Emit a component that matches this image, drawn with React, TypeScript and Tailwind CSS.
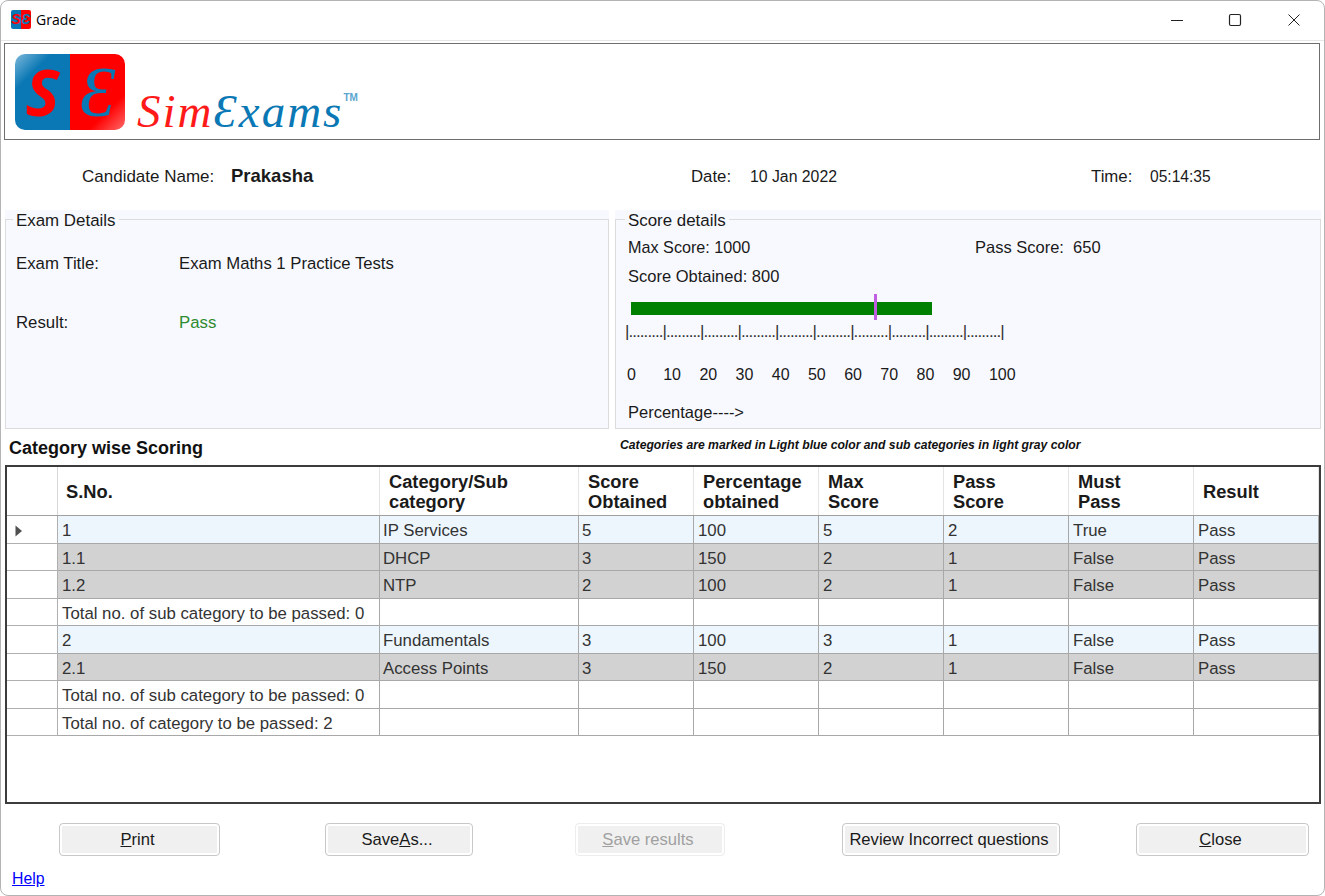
import React from "react";

const colW = ["w-[51px]", "w-[322px]", "w-[199px]", "w-[115px]", "w-[125px]", "w-[125px]", "w-[125px]", "w-[125px]", "w-[125px]"];

const headers = [
  ["S.No."],
  ["Category/Sub", "category"],
  ["Score", "Obtained"],
  ["Percentage", "obtained"],
  ["Max", "Score"],
  ["Pass", "Score"],
  ["Must", "Pass"],
  ["Result"],
];

type Row = { bg: string; cells: string[]; mark?: boolean };
const rows: Row[] = [
  { bg: "bg-[#edf6fd]", mark: true, cells: ["1", "IP Services", "5", "100", "5", "2", "True", "Pass"] },
  { bg: "bg-[#d2d2d2]", cells: ["1.1", "DHCP", "3", "150", "2", "1", "False", "Pass"] },
  { bg: "bg-[#d2d2d2]", cells: ["1.2", "NTP", "2", "100", "2", "1", "False", "Pass"] },
  { bg: "bg-white", cells: ["Total no. of sub category to be passed: 0", "", "", "", "", "", "", ""] },
  { bg: "bg-[#edf6fd]", cells: ["2", "Fundamentals", "3", "100", "3", "1", "False", "Pass"] },
  { bg: "bg-[#d2d2d2]", cells: ["2.1", "Access Points", "3", "150", "2", "1", "False", "Pass"] },
  { bg: "bg-white", cells: ["Total no. of sub category to be passed: 0", "", "", "", "", "", "", ""] },
  { bg: "bg-white", cells: ["Total no. of category to be passed: 2", "", "", "", "", "", "", ""] },
];

const ticks = [0, 10, 20, 30, 40, 50, 60, 70, 80, 90, 100];

function Btn({ w, ml, disabled, children }: { w: string; ml: string; disabled?: boolean; children: React.ReactNode }) {
  return (
    <button
      className={`${w} ${ml} h-[33px] rounded-[4px] border text-[16.6px] pt-[2px] pr-[4px] flex items-center justify-center shadow-[inset_0_0_0_2px_#fff] bg-[#f0f0f0] ${
        disabled ? "border-[#ededed] text-[#a0a0a0]" : "border-[#c8c8c8] text-[#1a1a1a]"
      }`}
    >
      {children}
    </button>
  );
}

function Fieldset({ title, w, ml, pl, legend, children }: { title: string; w: string; ml: string; pl: string; legend: string; children: React.ReactNode }) {
  return (
    <div className={`${w} ${ml} h-[219px] relative bg-[#f8f9ff]`}>
      <div className={`mt-[9px] h-[210px] border border-[#dcdcdc] ${pl} relative`}>
        <div className={`absolute ${legend} top-[-9px] bg-[#f8f9ff] px-[3px] text-[16.9px] leading-[20px]`}>{title}</div>
        {children}
      </div>
    </div>
  );
}

export default function App() {
  return (
    <div className="w-[1325px] h-[896px] bg-white overflow-hidden rounded-t-[8px] rounded-b-[8px] border border-[#b4b4b4] font-['Liberation_Sans',Arial,sans-serif] text-[16.8px] text-[#1a1a1a] flex flex-col">
      {/* title bar */}
      <div className="h-[39px] flex items-center shrink-0">
        <div className="ml-[10px] mb-[2px] w-[20px] h-[19px] flex text-[14px] font-bold leading-[19px] italic">
          <span className="w-[10px] rounded-l-[2px] bg-[#0a78b4] text-[#ff0000] text-center">S</span>
          <span className="w-[10px] rounded-r-[2px] bg-[#ff0000] text-[#0a78b4] text-center">Ɛ</span>
        </div>
        <span className="ml-[5px] mb-[2px] text-[14px] font-['Open_Sans'] text-black">Grade</span>
        <div className="ml-auto flex items-center mr-[23px] mb-[2px]">
          <svg width="14" height="14" viewBox="0 0 14 14" className="mr-[44px]"><path d="M1 7.5H13" stroke="#222" strokeWidth="1" /></svg>
          <svg width="14" height="14" viewBox="0 0 14 14" className="mr-[45px]"><rect x="1.5" y="1.5" width="11" height="11" rx="1.5" fill="none" stroke="#222" strokeWidth="1.2" /></svg>
          <svg width="14" height="14" viewBox="0 0 14 14"><path d="M1.5 1.5L12.5 12.5M12.5 1.5L1.5 12.5" stroke="#222" strokeWidth="1" /></svg>
        </div>
      </div>
      <div className="h-[1px] bg-[#e6e6e6] shrink-0" />

      {/* logo */}
      <div className="ml-[3px] mt-[2px] w-[1316px] h-[97px] border border-[#6e6e6e] flex shrink-0">
        <div className="ml-[10px] mt-[10px] w-[110px] h-[76px] flex text-[64px] leading-[76px] italic">
          <span className="w-[55px] h-[76px] rounded-l-[10px] bg-[linear-gradient(135deg,#7db8dc_0%,#0a78b4_28%)] text-[#ff0000] text-center font-bold font-['Open_Sans']">S</span>
          <span className="w-[55px] h-[76px] rounded-r-[10px] bg-[linear-gradient(135deg,#ff0000_72%,#ff6a6a_100%)] text-[#0a78b4] text-center font-['Liberation_Serif'] text-[72px]">Ɛ</span>
        </div>
        <div className="ml-[12px] mt-[42px] h-[50px] flex items-start font-['Liberation_Serif'] italic text-[47px] leading-[50px] tracking-[2px]">
          <span className="text-[#ff1a1a]">Sim</span>
          <span className="text-[#0a78b4]">Ɛxams</span>
          <span className="text-[10px] leading-[14px] mt-[5px] not-italic tracking-normal font-bold font-['Liberation_Sans'] text-[#5aa6d0]">TM</span>
        </div>
      </div>

      {/* candidate row */}
      <div className="h-[70px] flex items-center shrink-0 pt-[3px]">
        <span className="ml-[81px] w-[149px] text-[17px]">Candidate Name:</span>
        <span className="w-[460px] font-bold text-[18.5px] mb-[2px]">Prakasha</span>
        <span className="w-[59px]">Date:</span>
        <span className="w-[341px] text-[15.8px]">10 Jan 2022</span>
        <span className="w-[59px]">Time:</span>
        <span className="text-[15.6px]">05:14:35</span>
      </div>

      {/* panels */}
      <div className="flex shrink-0">
        <Fieldset title="Exam Details" w="w-[604px]" ml="ml-[4px]" pl="pl-[10px]" legend="left-[7px]">
          <div className="flex mt-[34px] leading-[20px]">
            <span className="w-[163px]">Exam Title:</span>
            <span className="text-[16.7px]">Exam Maths 1 Practice Tests</span>
          </div>
          <div className="flex mt-[39px] leading-[20px]">
            <span className="w-[163px]">Result:</span>
            <span className="text-[#2e8b2e]">Pass</span>
          </div>
        </Fieldset>
        <Fieldset title="Score details" w="w-[706px]" ml="ml-[6px]" pl="pl-[12px]" legend="left-[9px]">
          <div className="flex mt-[17px] leading-[20px] text-[16.2px]">
            <span className="w-[347px]">Max Score: 1000</span>
            <span className="text-[16.5px]">Pass Score:&nbsp; 650</span>
          </div>
          <div className="mt-[9px] leading-[20px] text-[16.5px]">Score Obtained: 800</div>
          <div className="relative ml-[3px] mt-[16px] w-[301px] h-[13px] bg-[#008000]">
            <div className="absolute left-[243px] top-[-8px] w-[3px] h-[26px] bg-[#c060e0]" />
          </div>
          <div className="mt-[7px] text-[17px] tracking-[-0.94px] leading-[20px] whitespace-nowrap -ml-[3px] text-[#333]">
            |.........|.........|.........|.........|.........|.........|.........|.........|.........|.........|
          </div>
          <div className="flex mt-[23px] leading-[20px] -ml-[1px] text-[16px]">
            {ticks.map((t) => (
              <span key={t} className="w-[36.2px] shrink-0">{t}</span>
            ))}
          </div>
          <div className="mt-[17px] leading-[20px] text-[16.5px]">Percentage----&gt;</div>
        </Fieldset>
      </div>

      {/* caption row */}
      <div className="h-[36px] flex shrink-0">
        <span className="ml-[8px] mt-[9px] w-[611px] font-bold text-[18px] leading-[20px] text-[#111]">Category wise Scoring</span>
        <span className="mt-[6px] italic font-bold text-[12.2px] leading-[20px] text-[#111]">
          Categories are marked in Light blue color and sub categories in light gray color
        </span>
      </div>

      {/* grid */}
      <div className="ml-[4px] w-[1316px] h-[339px] border-2 border-[#3c3c3c] bg-white shrink-0">
        <div className="flex h-[49px] border-b border-[#a0a0a0]">
          <div className={`${colW[0]} border-r border-[#d8d8d8]`} />
          {headers.map((h, i) => (
            <div key={i} className={`${colW[i + 1]} ${i === 0 ? "pl-[8px]" : "pl-[9px]"} pt-[2px] border-r border-[#e4e4e4] flex flex-col justify-center font-bold text-[18.3px] leading-[20px] whitespace-nowrap`}>
              {h.map((l) => (
                <span key={l}>{l}</span>
              ))}
            </div>
          ))}
        </div>
        {rows.map((r, ri) => (
          <div key={ri} className="flex h-[27.5px]">
            <div className={`${colW[0]} border-r border-b border-[#b0b0b0] flex items-center pl-[8px] pt-[3px]`}>
              {r.mark && (
                <svg width="8" height="12" viewBox="0 0 8 12"><path d="M0.5 0.5L7 6L0.5 11.5Z" fill="#505050" /></svg>
              )}
            </div>
            {r.cells.map((c, ci) => (
              <div key={ci} className={`${colW[ci + 1]} ${r.bg} ${ci === 1 || ci === 2 ? "pl-[3px]" : "pl-[4px]"} pt-[3px] border-r border-b border-[#a8a8a8] flex items-center whitespace-nowrap text-[#333]`}>
                {c}
              </div>
            ))}
          </div>
        ))}
      </div>

      {/* buttons */}
      <div className="flex mt-[19px] shrink-0">
        <Btn w="w-[161px]" ml="ml-[58px]"><span><u>P</u>rint</span></Btn>
        <Btn w="w-[148px]" ml="ml-[105px]"><span>Save<u>A</u>s...</span></Btn>
        <Btn w="w-[150px]" ml="ml-[102px]" disabled><span><u>S</u>ave results</span></Btn>
        <Btn w="w-[218px]" ml="ml-[117px]"><span>Review Incorrect questions</span></Btn>
        <Btn w="w-[173px]" ml="ml-[76px]"><span><u>C</u>lose</span></Btn>
      </div>

      <a className="ml-[11px] mt-[13px] w-fit text-[15.8px] leading-[20px] text-[#0000ff] underline">Help</a>
    </div>
  );
}
